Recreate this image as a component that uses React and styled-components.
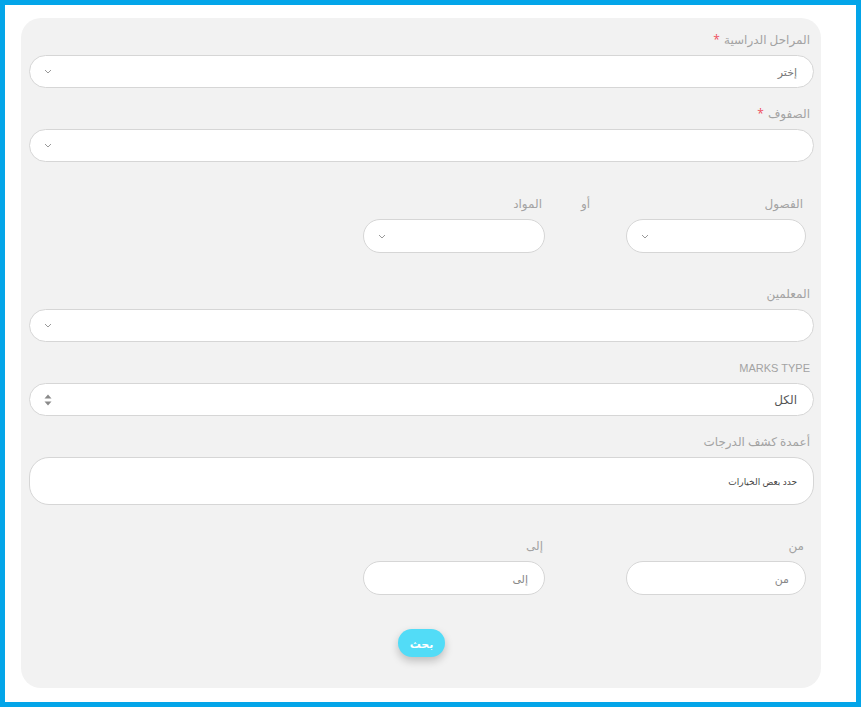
import React from 'react';
import styled, { createGlobalStyle } from 'styled-components';

const Global = createGlobalStyle`
  html, body { margin: 0; padding: 0; }
  body { font-family: "Open Sans", "DejaVu Sans", sans-serif; }
  * { box-sizing: border-box; }
`;

const Frame = styled.div`
  width: 100vw;
  height: 100vh;
  border: 5px solid #03a5e9;
  background: #fff;
  padding: 13px 0 0 16px;
`;

const Panel = styled.form`
  width: 800px;
  height: 670px;
  background: #f2f2f2;
  border-radius: 20px;
  padding: 13px 7px 0 8px;
  display: flex;
  flex-direction: column;
`;

const Group = styled.div`
  display: flex;
  flex-direction: column;
  margin-bottom: ${(p) => p.$mb ?? 17}px;
`;

const Label = styled.label`
  display: block;
  height: 18px;
  line-height: 18px;
  margin-bottom: 6px;
  padding-right: ${(p) => p.$inset ?? 4}px;
  color: #a3a3a3;
  text-align: ${(p) => (p.$center ? 'center' : 'right')};
  white-space: nowrap;
  font-family: ${(p) => (p.$latin ? '"Liberation Sans", Arial, sans-serif' : 'inherit')};
  font-size: ${(p) => (p.$latin ? '11px' : '12px')};
  text-transform: ${(p) => (p.$latin ? 'uppercase' : 'none')};
`;

const Star = styled.span`
  color: #ee4f5f;
  margin-right: 4px;
`;

const Field = styled.div`
  height: ${(p) => p.$h ?? 33}px;
  background: #fff;
  border: 1px solid #d6d6d6;
  border-radius: ${(p) => p.$r ?? 17}px;
  display: flex;
  align-items: center;
  padding: 0 16px 0 12px;
  font-size: ${(p) => p.$fs ?? 11}px;
  color: ${(p) => p.$color ?? '#777'};
`;

const Value = styled.span`
  flex: 1;
  text-align: right;
`;

const IconSlot = styled.span`
  display: flex;
  align-items: center;
  justify-content: center;
  width: 12px;
`;

const Row = styled.div`
  display: grid;
  grid-template-columns: 196px 65px 198px;
  margin: ${(p) => p.$mt ?? 33}px 0 32px;
`;

const Col = styled.div`
  padding: 0 8px;
  display: flex;
  flex-direction: column;
`;

const ButtonBar = styled.div`
  display: flex;
  justify-content: center;
  margin-top: 2px;
`;

const SearchButton = styled.button`
  width: 47px;
  height: 28px;
  border: none;
  border-radius: 14px;
  background: #52dcf7;
  color: #fff;
  font-family: inherit;
  font-size: 11px;
  font-weight: bold;
  box-shadow: 0 4px 8px rgba(0, 0, 0, 0.22);
`;

const Chevron = () => (
  <svg width="8" height="5" viewBox="0 0 8 5">
    <path d="M1 1 L4 4 L7 1" fill="none" stroke="#999" strokeWidth="1" />
  </svg>
);

const UpDown = () => (
  <svg width="8" height="12" viewBox="0 0 8 12">
    <path d="M4 0.5 L7.5 4.5 H0.5 Z" fill="#8a8a8a" />
    <path d="M4 11.5 L7.5 7.5 H0.5 Z" fill="#8a8a8a" />
  </svg>
);

const Select = ({ value, color, h, icon = 'chevron' }) => (
  <Field $h={h} $color={color} $fs={value === 'الكل' ? 12 : 11}>
    <Value>{value}</Value>
    <IconSlot>{icon === 'updown' ? <UpDown /> : <Chevron />}</IconSlot>
  </Field>
);

const App = () => (
  <Frame>
    <Global />
    <Panel dir="rtl">
      <Group>
        <Label>المراحل الدراسية<Star>*</Star></Label>
        <Select value="إختر" />
      </Group>
      <Group $mb={0}>
        <Label>الصفوف<Star>*</Star></Label>
        <Select value="" />
      </Group>

      <Row>
        <Col>
          <Label $inset={3}>الفصول</Label>
          <Select value="" h={34} />
        </Col>
        <Col>
          <Label $center $inset={0}>أو</Label>
        </Col>
        <Col>
          <Label $inset={3}>المواد</Label>
          <Select value="" h={34} />
        </Col>
      </Row>

      <Group>
        <Label>المعلمين</Label>
        <Select value="" />
      </Group>
      <Group>
        <Label $latin>Marks Type</Label>
        <Select value="الكل" color="#555" icon="updown" />
      </Group>
      <Group $mb={0}>
        <Label>أعمدة كشف الدرجات</Label>
        <Field $h={48} $r={20} $fs={9} $color="#444">
          <Value>حدد بعض الخيارات</Value>
        </Field>
      </Group>

      <Row $mt={32}>
        <Col>
          <Label $inset={2}>من</Label>
          <Field $h={34} $color="#888"><Value>من</Value></Field>
        </Col>
        <Col />
        <Col>
          <Label $inset={2}>إلى</Label>
          <Field $h={34} $color="#888"><Value>إلى</Value></Field>
        </Col>
      </Row>

      <ButtonBar>
        <SearchButton type="button">بحث</SearchButton>
      </ButtonBar>
    </Panel>
  </Frame>
);

export default App;
